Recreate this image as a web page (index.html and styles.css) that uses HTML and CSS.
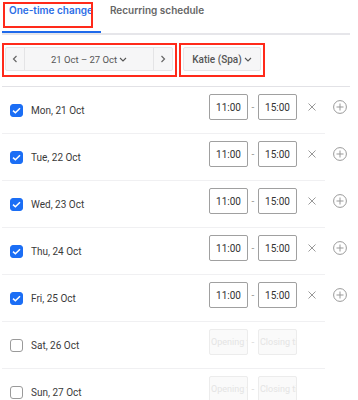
FILE: index.html
```html
<!DOCTYPE html>
<html>
<head>
<meta charset="utf-8">
<link rel="stylesheet" href="styles.css">
</head>
<body>
<div class="page">
  <div class="tabs">
    <div class="tab active"><span class="mark tab-mark"></span>One-time change</div>
    <div class="tab">Recurring schedule</div>
  </div>
  <div class="toolbar">
    <div class="redbox">
      <div class="week">
        <div class="seg arrow"><svg width="6" height="8" viewBox="0 0 6 8"><path d="M4.5 1 L1.5 4 L4.5 7" fill="none" stroke="#666" stroke-width="1.2"/></svg></div>
        <div class="seg mid">21 Oct – 27 Oct<svg class="chev" width="8" height="5" viewBox="0 0 8 5"><path d="M1 1 L4 4 L7 1" fill="none" stroke="#555" stroke-width="1.1"/></svg></div>
        <div class="seg arrow"><svg width="6" height="8" viewBox="0 0 6 8"><path d="M1.5 1 L4.5 4 L1.5 7" fill="none" stroke="#666" stroke-width="1.2"/></svg></div>
      </div>
    </div>
    <div class="redbox second">
      <div class="staff">Katie (Spa)<svg class="chev" width="8" height="5" viewBox="0 0 8 5"><path d="M1 1 L4 4 L7 1" fill="none" stroke="#555" stroke-width="1.1"/></svg></div>
    </div>
  </div>
  <div class="rows">
    <div class="row">
      <span class="cb on"><svg width="9" height="7" viewBox="0 0 9 7"><path d="M1 3.6 L3.4 5.8 L8 1.2" fill="none" stroke="#fff" stroke-width="1.5"/></svg></span>
      <span class="day">Mon, 21 Oct</span>
      <div class="time">11:00</div><span class="dash">-</span><div class="time">15:00</div>
      <svg class="x" width="8" height="8" viewBox="0 0 8 8"><path d="M0.5 0.5 L7.5 7.5 M7.5 0.5 L0.5 7.5" stroke="#999" stroke-width="1"/></svg>
      <svg class="plus" width="14" height="14" viewBox="0 0 14 14"><circle cx="7" cy="7" r="6.4" fill="none" stroke="#999" stroke-width="1"/><path d="M7 3.5 V10.5 M3.5 7 H10.5" stroke="#999" stroke-width="1"/></svg>
    </div>
    <div class="row">
      <span class="cb on"><svg width="9" height="7" viewBox="0 0 9 7"><path d="M1 3.6 L3.4 5.8 L8 1.2" fill="none" stroke="#fff" stroke-width="1.5"/></svg></span>
      <span class="day">Tue, 22 Oct</span>
      <div class="time">11:00</div><span class="dash">-</span><div class="time">15:00</div>
      <svg class="x" width="8" height="8" viewBox="0 0 8 8"><path d="M0.5 0.5 L7.5 7.5 M7.5 0.5 L0.5 7.5" stroke="#999" stroke-width="1"/></svg>
      <svg class="plus" width="14" height="14" viewBox="0 0 14 14"><circle cx="7" cy="7" r="6.4" fill="none" stroke="#999" stroke-width="1"/><path d="M7 3.5 V10.5 M3.5 7 H10.5" stroke="#999" stroke-width="1"/></svg>
    </div>
    <div class="row">
      <span class="cb on"><svg width="9" height="7" viewBox="0 0 9 7"><path d="M1 3.6 L3.4 5.8 L8 1.2" fill="none" stroke="#fff" stroke-width="1.5"/></svg></span>
      <span class="day">Wed, 23 Oct</span>
      <div class="time">11:00</div><span class="dash">-</span><div class="time">15:00</div>
      <svg class="x" width="8" height="8" viewBox="0 0 8 8"><path d="M0.5 0.5 L7.5 7.5 M7.5 0.5 L0.5 7.5" stroke="#999" stroke-width="1"/></svg>
      <svg class="plus" width="14" height="14" viewBox="0 0 14 14"><circle cx="7" cy="7" r="6.4" fill="none" stroke="#999" stroke-width="1"/><path d="M7 3.5 V10.5 M3.5 7 H10.5" stroke="#999" stroke-width="1"/></svg>
    </div>
    <div class="row">
      <span class="cb on"><svg width="9" height="7" viewBox="0 0 9 7"><path d="M1 3.6 L3.4 5.8 L8 1.2" fill="none" stroke="#fff" stroke-width="1.5"/></svg></span>
      <span class="day">Thu, 24 Oct</span>
      <div class="time">11:00</div><span class="dash">-</span><div class="time">15:00</div>
      <svg class="x" width="8" height="8" viewBox="0 0 8 8"><path d="M0.5 0.5 L7.5 7.5 M7.5 0.5 L0.5 7.5" stroke="#999" stroke-width="1"/></svg>
      <svg class="plus" width="14" height="14" viewBox="0 0 14 14"><circle cx="7" cy="7" r="6.4" fill="none" stroke="#999" stroke-width="1"/><path d="M7 3.5 V10.5 M3.5 7 H10.5" stroke="#999" stroke-width="1"/></svg>
    </div>
    <div class="row">
      <span class="cb on"><svg width="9" height="7" viewBox="0 0 9 7"><path d="M1 3.6 L3.4 5.8 L8 1.2" fill="none" stroke="#fff" stroke-width="1.5"/></svg></span>
      <span class="day">Fri, 25 Oct</span>
      <div class="time">11:00</div><span class="dash">-</span><div class="time">15:00</div>
      <svg class="x" width="8" height="8" viewBox="0 0 8 8"><path d="M0.5 0.5 L7.5 7.5 M7.5 0.5 L0.5 7.5" stroke="#999" stroke-width="1"/></svg>
      <svg class="plus" width="14" height="14" viewBox="0 0 14 14"><circle cx="7" cy="7" r="6.4" fill="none" stroke="#999" stroke-width="1"/><path d="M7 3.5 V10.5 M3.5 7 H10.5" stroke="#999" stroke-width="1"/></svg>
    </div>
    <div class="row">
      <span class="cb"></span>
      <span class="day">Sat, 26 Oct</span>
      <div class="time off">Opening time</div><span class="dash off">-</span><div class="time off">Closing time</div>
      <span class="spacer"></span>
    </div>
    <div class="row">
      <span class="cb"></span>
      <span class="day">Sun, 27 Oct</span>
      <div class="time off">Opening time</div><span class="dash off">-</span><div class="time off">Closing time</div>
      <span class="spacer"></span>
    </div>
  </div>
</div>
</body>
</html>
```
FILE: styles.css
```css
* { box-sizing: border-box; }
html, body { margin: 0; padding: 0; background: #fff; }
body { font-family: Roboto, "Liberation Sans", sans-serif; color: #333; overflow: hidden; }
.page { width: 358px; height: 400px; padding-left: 2px; }

.tabs { display: flex; width: 348px; border-bottom: 2px solid #e6e6ea; font-family: Inter, Roboto, sans-serif; }
.tab { position: relative; padding: 4px 8px 14px 7px; font-size: 10px; line-height: 13px; font-weight: 600; color: #666; border-bottom: 2px solid transparent; white-space: nowrap; }
.tab + .tab { padding-left: 9px; }
.tab.active { color: #2b6de6; border-bottom-color: #1f6aeb; }
.mark { position: absolute; border: 2px solid #ff2a1a; }
.tab-mark { left: 1px; top: 2px; width: 90px; height: 26px; }

.toolbar { display: flex; width: 348px; padding: 8px 0 9px; border-bottom: 1px solid #e2e2e6; }
.redbox { border: 2px solid #ff2a1a; padding: 2px 2px 4px 1px; }
.redbox.second { margin-left: 2px; padding-left: 2px; }
.week { display: flex; width: 168px; height: 24px; background: #f6f6f7; border: 1px solid #e6e6e8; border-radius: 2px; }
.seg { display: flex; align-items: center; justify-content: center; font-size: 9.5px; color: #555; }
.arrow { width: 18px; }
.mid { flex: 1; border-left: 1px solid #e4e4e6; border-right: 1px solid #e4e4e6; }
.chev { margin-left: 2px; margin-top: 1px; }
.staff { display: flex; align-items: center; justify-content: center; width: 78px; height: 24px; background: #f6f6f7; border: 1px solid #e6e6e8; border-radius: 2px; font-size: 10px; font-weight: 500; color: #555; }

.rows { width: 323px; }
.row { display: flex; align-items: center; height: 47px; padding: 7px 0 13px 8px; border-bottom: 1px solid #f0f0f2; }
.cb { flex: none; width: 13px; height: 13px; margin-top: 6px; border: 1.5px solid #9a9a9a; border-radius: 3px; display: flex; align-items: center; justify-content: center; }
.cb.on { background: #1b6ef5; border-color: #1b6ef5; }
.day { margin-left: 8px; margin-top: 6px; font-size: 10px; color: #3a3a3a; }
.time { flex: none; width: 39px; height: 26px; margin-left: auto; border: 1px solid #a0a0a0; border-radius: 2px; display: flex; align-items: center; justify-content: center; font-size: 10px; color: #333; overflow: hidden; white-space: nowrap; }
.time + .dash + .time { margin-left: 0; }
.time.off { background: #fafafa; border-color: #ececec; color: #e4e4e4; justify-content: flex-start; padding-left: 1px; font-size: 9px; }
.dash { width: 10px; text-align: center; font-size: 10px; color: #999; }
.dash.off { color: #ddd; }
.x { flex: none; margin-left: 11px; }
.plus { flex: none; margin-left: 17px; margin-right: -22px; }
.spacer { flex: none; width: 50px; margin-right: -22px; }
```
